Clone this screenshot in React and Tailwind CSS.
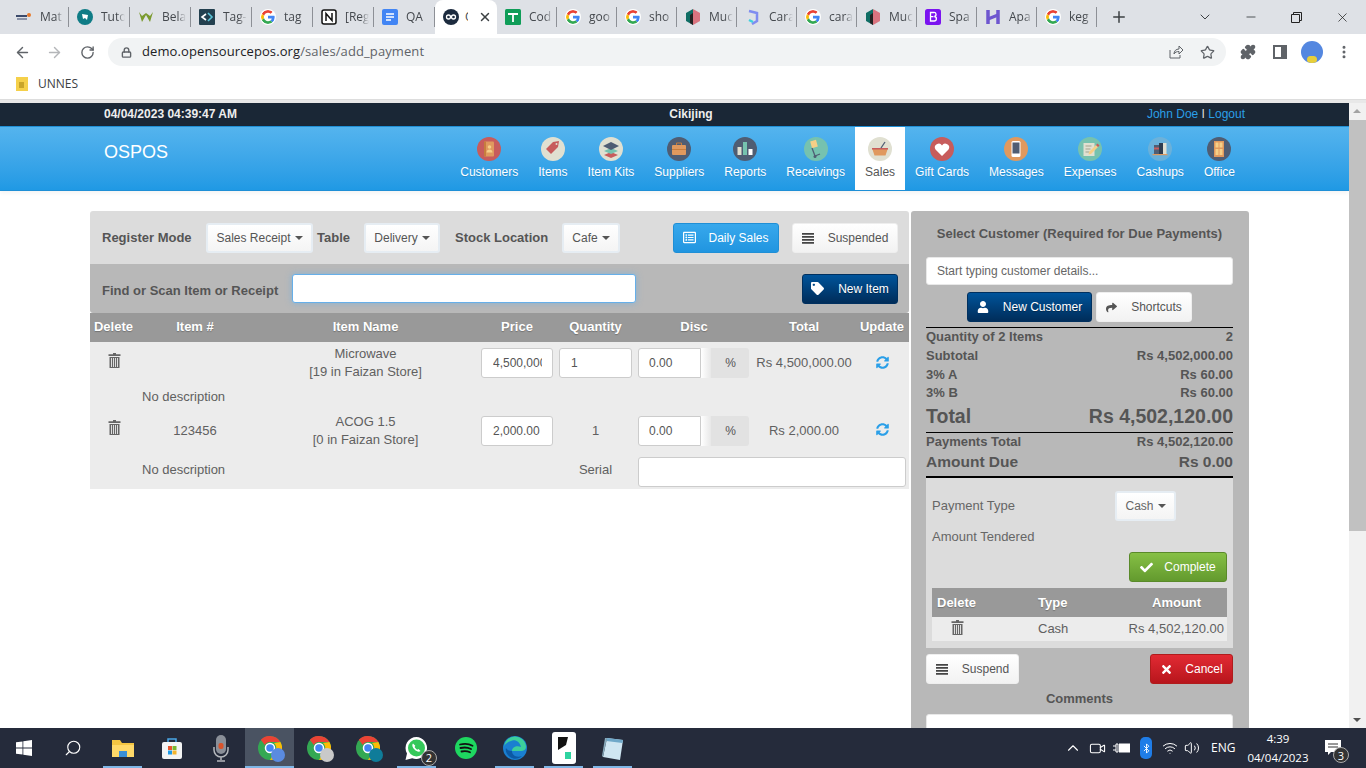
import { FaTag, FaUser, FaShare, FaCheck, FaTimes, FaSyncAlt, FaRegListAlt } from "react-icons/fa";
import { ArrowLeft, ArrowRight, RotateCw, Lock, Star, Puzzle, MoreVertical, ChevronDown, Minus, X, Plus, ChevronUp, Search, Video, Bluetooth, Volume2, Wifi } from "lucide-react";

const tabs = [
  ["Mat", "ahoy"], ["Tuto", "tuto"], ["Bela", "w"], ["Tag-", "tagit"], ["tag", "g"], ["[Reg", "notion"], ["QA", "docs"],
  ["O", "op", true], ["Cod", "sheets"], ["goo", "g"], ["sho", "g"], ["Muc", "cube"], ["Cara", "cara"], ["cara", "g"], ["Muc", "cube"], ["Spa", "bs"], ["Apa", "apa"], ["keg", "g"],
];

const menu = [
  ["Customers", "customers"], ["Items", "items"], ["Item Kits", "kits"], ["Suppliers", "suppliers"], ["Reports", "reports"], ["Receivings", "receivings"],
  ["Sales", "sales", true], ["Gift Cards", "gift"], ["Messages", "messages"], ["Expenses", "expenses"], ["Cashups", "cashups"], ["Office", "office"],
];

function GoogleG({ size = 16 }) {
  return (
    <svg width={size} height={size} viewBox="0 0 48 48" className="rounded-full bg-white p-[1px]">
      <path fill="#EA4335" d="M24 9.5c3.5 0 6.700 1.200 9.200 3.600l6.900-6.900C35.900 2.400 30.500 0 24 0 14.600 0 6.500 5.400 2.600 13.200l8 6.200C12.500 13.700 17.800 9.500 24 9.500z" />
      <path fill="#4285F4" d="M47 24.500c0-1.600-.1-3.100-.4-4.500H24v9h12.900c-.6 3-2.200 5.500-4.700 7.200l7.700 6C44.400 38 47 31.800 47 24.500z" />
      <path fill="#FBBC05" d="M10.600 28.600A14.500 14.500 0 0 1 10.600 19.400l-8-6.200a24 24 0 0 0 0 21.600l8-6.200z" />
      <path fill="#34A853" d="M24 48c6.500 0 11.900-2.100 15.900-5.800l-7.700-6c-2.200 1.500-4.900 2.300-8.200 2.300-6.200 0-11.500-4.200-13.400-9.900l-8 6.200C6.500 42.600 14.600 48 24 48z" />
    </svg>
  );
}

function Favicon({ kind }) {
  if (kind === "g") return <GoogleG />;
  if (kind === "ahoy") return (
    <svg width="16" height="16" viewBox="0 0 16 16"><rect x="0" y="6" width="11" height="2" fill="#3b4a6b" /><rect x="1" y="9" width="10" height="2" fill="#8a93a8" /><circle cx="13" cy="6" r="2" fill="#e8792b" /></svg>
  );
  if (kind === "tuto") return (
    <svg width="16" height="16" viewBox="0 0 16 16"><circle cx="8" cy="8" r="8" fill="#0f7c86" /><path d="M5 5l6 1-1 5-2-2-2 1z" fill="#fff" /></svg>
  );
  if (kind === "w") return (
    <svg width="16" height="16" viewBox="0 0 16 16"><path d="M1 3l3 10 4-7 4 7 3-10-3 4-4-3-4 3z" fill="#7a9a2e" /></svg>
  );
  if (kind === "tagit") return (
    <svg width="16" height="16" viewBox="0 0 16 16"><rect width="16" height="16" rx="1" fill="#23404f" /><path d="M7 5L3 8l4 3" stroke="#fff" strokeWidth="1.600" fill="none" /><path d="M9 4l4 4-4 4" stroke="#5cc4d8" strokeWidth="1.600" fill="none" /></svg>
  );
  if (kind === "notion") return (
    <svg width="16" height="16" viewBox="0 0 16 16"><rect x="1" y="1" width="14" height="14" rx="2" fill="#fff" stroke="#111" strokeWidth="1.500" /><path d="M5 12V4.500l6 7V4" stroke="#111" strokeWidth="1.500" fill="none" /></svg>
  );
  if (kind === "docs") return (
    <svg width="16" height="16" viewBox="0 0 16 16"><rect width="16" height="16" rx="2" fill="#4285f4" /><path d="M4 5h8M4 8h8M4 11h5" stroke="#fff" strokeWidth="1.500" /></svg>
  );
  if (kind === "op") return (
    <svg width="16" height="16" viewBox="0 0 16 16"><circle cx="8" cy="8" r="8" fill="#1c2b3e" /><circle cx="5.500" cy="8" r="2" stroke="#fff" strokeWidth="1.300" fill="none" /><circle cx="10.500" cy="8" r="2" stroke="#fff" strokeWidth="1.300" fill="none" /></svg>
  );
  if (kind === "sheets") return (
    <svg width="16" height="16" viewBox="0 0 16 16"><rect width="16" height="16" rx="1.500" fill="#0f9d58" /><path d="M3 5h10M8 5v8" stroke="#fff" strokeWidth="1.800" /></svg>
  );
  if (kind === "cube") return (
    <svg width="16" height="16" viewBox="0 0 16 16"><path d="M8 0l7 4v8l-7 4z" fill="#d9737f" /><path d="M8 0L1 4v8l7 4z" fill="#0f6d64" /><path d="M5 6l3-2v12l-3-2z" fill="#222" /></svg>
  );
  if (kind === "cara") return (
    <svg width="16" height="16" viewBox="0 0 16 16"><path d="M4 2l8 2v8l-5 3" stroke="#7f8cf0" strokeWidth="2.500" fill="none" /><path d="M4 11l4 2" stroke="#3ed0e0" strokeWidth="2.500" /></svg>
  );
  if (kind === "bs") return (
    <svg width="16" height="16" viewBox="0 0 16 16"><rect width="16" height="16" rx="2.500" fill="#7b13f0" /><path d="M5.500 3.500h3.200a2 2 0 0 1 .6 4 2.200 2.200 0 0 1-.4 4.500H5.500zM5.500 7.600h3" stroke="#fff" strokeWidth="1.300" fill="none" /></svg>
  );
  return (
    <svg width="16" height="16" viewBox="0 0 16 16"><path d="M3 1v14M13 1v14" stroke="#6e56cf" strokeWidth="3.500" /><path d="M3 10l10-4" stroke="#6e56cf" strokeWidth="3" /></svg>
  );
}

function Tab({ title, icon, active, first7 }) {
  if (active) {
    return (
      <div className="relative z-10 flex h-[34px] w-[62px] shrink-0 items-center rounded-t-lg bg-white pl-2">
        <Favicon kind={icon} />
        <span className="ml-[6px] w-[3px] overflow-hidden text-xs text-[#45494e]">{title}</span>
        <X size={14} strokeWidth={2.500} className="ml-[10px] text-[#3c4043]" />
      </div>
    );
  }
  return (
    <div className={`flex h-[34px] shrink-0 items-center pl-2 ${first7 ? "w-[61px]" : "w-[60px]"}`}>
      <Favicon kind={icon} />
      <span className="ml-2 w-[24px] overflow-hidden whitespace-nowrap text-xs text-[#45494e] [mask-image:linear-gradient(90deg,#000_65%,transparent)]">{title}</span>
      <span className="ml-auto h-[20px] w-px bg-[#8d9096]" />
    </div>
  );
}

function MenuIcon({ kind }) {
  const body = {
    customers: <><circle cx="12" cy="12" r="12" fill="#c75c5c" /><rect x="7" y="4.500" width="10" height="15" rx="1" fill="#e0995e" /><path d="M7 4.500h2v15H7z" fill="#c77d3d" /><circle cx="12.500" cy="10" r="1.800" fill="#f5cf87" /><path d="M9.500 15.500c0-2 1.400-3 3-3s3 1 3 3z" fill="#f5cf87" /></>,
    items: <><circle cx="12" cy="12" r="12" fill="#e0e0d1" /><path d="M5 12l7-7 6-1-1 6-7 7z" fill="#c75c5c" /><circle cx="15.500" cy="7" r="1" fill="#e0e0d1" /></>,
    kits: <><circle cx="12" cy="12" r="12" fill="#e0e0d1" /><path d="M12 15l7 3-7 3-7-3z" fill="#c75c5c" /><path d="M12 11l7 3-7 3-7-3z" fill="#76c2af" /><path d="M12 5l8 4-8 4-8-4z" fill="#4f5d73" /></>,
    suppliers: <><circle cx="12" cy="12" r="12" fill="#4f5d73" /><rect x="5" y="8" width="14" height="10" rx="1" fill="#e0995e" /><path d="M9.500 8V6h5v2" stroke="#c77d3d" fill="none" /><rect x="5" y="12" width="14" height="1" fill="#c77d3d" /></>,
    reports: <><circle cx="12" cy="12" r="12" fill="#4f5d73" /><rect x="4.500" y="10" width="4" height="8" fill="#e0e0d1" /><rect x="10" y="5" width="4" height="13" fill="#76c2af" /><rect x="15.500" y="12" width="4" height="6" fill="#fff" /></>,
    receivings: <><circle cx="12" cy="12" r="12" fill="#76c2af" /><rect x="7" y="3.500" width="6" height="7" fill="#f5cf87" transform="rotate(-15 10 7)" /><path d="M8 11l3 8 5-2" stroke="#4f5d73" strokeWidth="1.300" fill="none" /><circle cx="11" cy="19.500" r="1.500" fill="#4f5d73" /></>,
    sales: <><circle cx="12" cy="12" r="12" fill="#e0e0d1" /><path d="M4 11h16l-2.500 7.500h-11z" fill="#e0995e" /><path d="M4 11h16v1.500H4z" fill="#c75c5c" /><path d="M13 11l4-6" stroke="#4f5d73" strokeWidth="1.300" /></>,
    gift: <><circle cx="12" cy="12" r="12" fill="#c75c5c" /><path d="M12 19l-6.500-6.500a3.800 3.800 0 0 1 6.500-4 3.800 3.800 0 0 1 6.500 4z" fill="#fff" /></>,
    messages: <><circle cx="12" cy="12" r="12" fill="#e0995e" /><rect x="7.500" y="4" width="9" height="16" rx="1.500" fill="#fff" /><rect x="8.500" y="5.500" width="7" height="11" fill="#4f5d73" /></>,
    expenses: <><circle cx="12" cy="12" r="12" fill="#76c2af" /><rect x="5.500" y="6" width="11" height="13" fill="#e0e0d1" /><path d="M7.500 9h6M7.500 12h5M7.500 15h4" stroke="#a3a38f" /><path d="M11 15l7-7 2 2-7 7-2.500.5z" fill="#f5cf87" /><path d="M18 8l1.500-1.500 2 2L20 10z" fill="#c75c5c" /></>,
    cashups: <><circle cx="12" cy="12" r="12" fill="#77b3d4" opacity=".75" /><rect x="6" y="8" width="5" height="9" fill="#4f5d73" /><rect x="6" y="10.500" width="5" height="2" fill="#c75c5c" /><rect x="11" y="6" width="4" height="11" fill="#2f3d4f" /><rect x="15" y="6" width="3.500" height="11" fill="#e0e0d1" /><rect x="4.500" y="17" width="15" height="1.200" fill="#e0995e" /></>,
    office: <><circle cx="12" cy="12" r="12" fill="#4f5d73" /><rect x="7" y="4" width="10" height="16" fill="#e0995e" /><rect x="8.500" y="5.500" width="3" height="5" fill="#f5cf87" /><rect x="12.500" y="5.500" width="3" height="5" fill="#f5cf87" /><rect x="8.500" y="12" width="3" height="6" fill="#f5cf87" /><rect x="12.500" y="12" width="3" height="6" fill="#f5cf87" /></>,
  };
  return <svg width="24" height="24" viewBox="0 0 24 24">{body[kind]}</svg>;
}

function Trash() {
  return (
    <svg width="13" height="15" viewBox="0 0 13 15" className="text-[#666]">
      <path d="M5 0h3v1.200h4.500V3H.5V1.200H5z" fill="currentColor" />
      <path d="M1.500 4h10v11h-10z" fill="currentColor" />
      <path d="M3.500 5v9M5.500 5v9M7.500 5v9M9.500 5v9" stroke="#ececec" strokeWidth=".9" />
    </svg>
  );
}

function Bars() {
  return (
    <svg width="12" height="12" viewBox="0 0 12 12" className="text-[#444]">
      <path d="M0 1h12v1.800H0zM0 4h12v1.800H0zM0 7h12v1.800H0zM0 10h12v1.800H0z" fill="currentColor" />
    </svg>
  );
}

function Dropdown({ label, className = "" }) {
  return (
    <div className={`flex h-[30px] items-center justify-center rounded-[3px] border-2 border-[#e6edf3] bg-gradient-to-b from-white to-[#f4f4f4] text-xs text-[#555] ${className}`}>
      {label}
      <span className="ml-1 h-0 w-0 border-x-4 border-t-4 border-x-transparent border-t-[#555]" />
    </div>
  );
}

const whiteBtn = "flex h-[30px] items-center justify-center gap-[14px] rounded-[3px] border border-[#eee] bg-gradient-to-b from-white to-[#f2f2f2] text-xs text-[#555]";
const darkBtn = "flex h-[30px] items-center justify-center gap-[14px] rounded-[3px] border border-[#00305f] bg-gradient-to-b from-[#00549b] to-[#002d5a] text-xs text-white [text-shadow:0_1px_0_rgba(0,0,0,0.3)]";
const tdCls = "p-0 pb-[1px] text-center align-middle";
const inputCls = "flex h-[30px] items-center rounded-[3px] border border-[#ccc] bg-white pl-[11px] pr-[10px] text-xs text-[#555] whitespace-nowrap";

function DiscInput() {
  return (
    <div className="flex h-[30px] w-[111px]">
      <div className="flex w-[63px] items-center rounded-l-[3px] border border-[#ccc] bg-white pl-[10px] text-xs text-[#555]">0.00</div>
      <div className="w-[10px] bg-gradient-to-r from-white to-[#e8e8e8]" />
      <div className="flex flex-1 items-center justify-center rounded-r-[3px] bg-[#e2e2e2] pl-[1px] text-xs text-[#555]">%</div>
    </div>
  );
}

function UpdateCell() {
  return <td className="p-0 pb-[3px] text-center align-middle"><FaSyncAlt size={13} className="mx-auto text-[#2a9fe8]" /></td>;
}

function SummaryRow({ left, right, className }) {
  return (
    <div className={`flex items-center justify-between font-bold text-[#555] ${className}`}>
      <span>{left}</span>
      <span>{right}</span>
    </div>
  );
}

function RegisterPanel() {
  return (
    <div className="w-[819px] shrink-0">
      <div className="flex h-[53px] items-center rounded-t-[3px] bg-[#dcdcdc] pl-[12px]">
        <span className="w-[104px] text-[13px] font-bold text-[#555]">Register Mode</span>
        <Dropdown label="Sales Receipt" className="w-[107px]" />
        <span className="ml-[4px] w-[47px] text-[13px] font-bold text-[#555]">Table</span>
        <Dropdown label="Delivery" className="w-[76px]" />
        <span className="ml-[15px] w-[107px] text-[13px] font-bold text-[#555]">Stock Location</span>
        <Dropdown label="Cafe" className="w-[58px]" />
        <div className="ml-[53px] flex h-[30px] w-[106px] items-center justify-center gap-[12px] rounded-[3px] border border-[#1f8fd6] bg-gradient-to-b from-[#37a8ec] to-[#2095e0] text-xs text-white">
          <FaRegListAlt size={13} /> Daily Sales
        </div>
        <div className={`${whiteBtn} ml-[13px] w-[106px]`}><Bars /> Suspended</div>
      </div>
      <div className="flex h-[49px] items-center rounded-b-[3px] bg-[#b8b8b8] pl-[12px]">
        <span className="w-[190px] pt-[4px] text-[13px] font-bold text-[#555]">Find or Scan Item or Receipt</span>
        <div className="h-[29px] w-[344px] rounded-[3px] border border-[#66afe9] bg-white shadow-[0_0_6px_rgba(102,175,233,0.6)]" />
        <div className={`${darkBtn} ml-[166px] w-[96px]`}><FaTag size={13} /> New Item</div>
      </div>
      <table className="w-full table-fixed border-collapse bg-[#ececec] text-[13px] text-[#606060]">
        <colgroup>
          <col className="w-[47px]" /><col className="w-[116px]" /><col className="w-[225px]" /><col className="w-[78px]" />
          <col className="w-[79px]" /><col className="w-[118px]" /><col className="w-[102px]" /><col className="w-[54px]" />
        </colgroup>
        <thead>
          <tr className="h-[29px] bg-[#999] text-[13px] font-bold text-white [text-shadow:0_1px_1px_rgba(0,0,0,0.25)]">
            {["Delete", "Item #", "Item Name", "Price", "Quantity", "Disc", "Total", "Update"].map((h) => (
              <th key={h} className="p-0 pb-[2px] text-center font-bold">{h}</th>
            ))}
          </tr>
        </thead>
        <tbody>
          <tr className="h-[43px]">
            <td className={tdCls}><span className="inline-block pl-[1px]"><Trash /></span></td>
            <td className={tdCls} />
            <td className={`${tdCls} leading-[18px]`}>Microwave<br />[19 in Faizan Store]</td>
            <td className={tdCls}><div className={`${inputCls} ml-[3px] w-[72px]`}><span className="block min-w-0 overflow-hidden">4,500,000</span></div></td>
            <td className={tdCls}><div className={`${inputCls} ml-[3px] w-[73px]`}>1</div></td>
            <td className={`${tdCls} pl-[3px]`}><DiscInput /></td>
            <td className={tdCls}>Rs 4,500,000.00</td>
            <UpdateCell />
          </tr>
          <tr className="h-[23px]"><td /><td colSpan={7} className="p-0 pl-[5px]">No description</td></tr>
          <tr className="h-[46px]">
            <td className={tdCls}><span className="inline-block pl-[1px]"><Trash /></span></td>
            <td className={tdCls}>123456</td>
            <td className={`${tdCls} leading-[18px]`}>ACOG 1.5<br />[0 in Faizan Store]</td>
            <td className={tdCls}><div className={`${inputCls} ml-[3px] w-[72px]`}>2,000.00</div></td>
            <td className={tdCls}>1</td>
            <td className={`${tdCls} pl-[3px]`}><DiscInput /></td>
            <td className={tdCls}>Rs 2,000.00</td>
            <UpdateCell />
          </tr>
          <tr className="h-[35px]">
            <td /><td className="p-0 pb-[3px] pl-[5px]">No description</td><td /><td />
            <td className="p-0 pb-[3px] text-center">Serial</td>
            <td colSpan={3} className="p-0 pl-[3px]"><div className="h-[30px] w-[268px] rounded-[3px] border border-[#ccc] bg-white" /></td>
          </tr>
        </tbody>
      </table>
    </div>
  );
}

function CustomerPanel() {
  return (
    <div className="h-[517px] w-[338px] shrink-0 overflow-hidden rounded-t-[3px] bg-[#b8b8b8] pl-[15px] pr-[16px] text-[#555]">
      <div className="flex h-[46px] items-center justify-center text-[13px] font-bold">Select Customer (Required for Due Payments)</div>
      <div className="flex h-[28px] items-center rounded-[3px] border border-[#e8e8e8] bg-white pl-[10px] text-xs text-[#666]">Start typing customer details...</div>
      <div className="mt-[7px] flex justify-center gap-[4px]">
        <div className={`${darkBtn} w-[125px]`}><FaUser size={12} /> New Customer</div>
        <div className={`${whiteBtn} w-[96px]`}><FaShare size={11} /> Shortcuts</div>
      </div>
      <div className="mt-[5px] border-t border-black">
        <SummaryRow left="Quantity of 2 Items" right="2" className="h-[18px] text-[13px]" />
        <SummaryRow left="Subtotal" right="Rs 4,502,000.00" className="h-[19px] text-[13px]" />
        <SummaryRow left="3% A" right="Rs 60.00" className="h-[19px] text-[13px]" />
        <SummaryRow left="3% B" right="Rs 60.00" className="h-[18px] text-[13px]" />
        <SummaryRow left="Total" right="Rs 4,502,120.00" className="h-[30px] text-[19.5px]" />
      </div>
      <div className="border-t border-black">
        <SummaryRow left="Payments Total" right="Rs 4,502,120.00" className="h-[18px] text-[13px]" />
        <SummaryRow left="Amount Due" right="Rs 0.00" className="h-[25px] pb-[4px] text-[15.5px]" />
      </div>
      <div className="h-[172px] border-t-2 border-black bg-[#dcdcdc] px-[6px] pt-[13px] text-[13px] text-[#666]">
        <div className="flex h-[30px] items-center justify-between pr-[51px]">
          <span>Payment Type</span>
          <Dropdown label="Cash" className="w-[61px] from-[#f3f3f3] to-[#eeeeee] text-[#666]" />
        </div>
        <div className="mt-[6px] flex h-[20px] items-center">Amount Tendered</div>
        <div className="mt-[5px] flex justify-end">
          <div className="flex h-[30px] w-[98px] items-center justify-center gap-[11px] rounded-[3px] border border-[#5a8a2a] bg-gradient-to-b from-[#86c045] to-[#639a2e] text-xs text-white">
            <FaCheck size={13} /> Complete
          </div>
        </div>
        <div className="mt-[6px] flex h-[29px] items-center bg-[#999] text-[13px] font-bold text-white [text-shadow:0_1px_1px_rgba(0,0,0,0.25)]">
          <span className="w-[106px] pl-[5px]">Delete</span>
          <span className="w-[78px]">Type</span>
          <span className="flex-1 pl-[36px]">Amount</span>
        </div>
        <div className="flex h-[24px] items-center bg-[#ececec] text-[#606060]">
          <span className="w-[106px] pb-[4px] pl-[19px]"><Trash /></span>
          <span className="w-[78px]">Cash</span>
          <span className="flex-1 pr-[3px] text-right">Rs 4,502,120.00</span>
        </div>
      </div>
      <div className="mt-[6px] flex justify-between">
        <div className={`${whiteBtn} w-[93px]`}><Bars /> Suspend</div>
        <div className="flex h-[30px] w-[83px] items-center justify-center gap-[12px] rounded-[3px] border border-[#b01c1c] bg-gradient-to-b from-[#e22a33] to-[#b8151c] text-xs text-white">
          <FaTimes size={13} /> Cancel
        </div>
      </div>
      <div className="mt-[5px] text-center text-[13px] font-bold">Comments</div>
      <div className="mt-[5px] h-[60px] rounded-[3px] border border-[#e8e8e8] bg-white" />
    </div>
  );
}

function TaskIcon({ kind }) {
  if (kind === "folder") return (
    <svg width="24" height="24" viewBox="0 0 24 24"><path d="M1 4h8l2 3h12v14H1z" fill="#f4c542" /><path d="M1 9h22v12H1z" fill="#ffd969" /><path d="M8 21v-6h8v6" fill="#3a8fd8" /></svg>
  );
  if (kind === "store") return (
    <svg width="24" height="24" viewBox="0 0 24 24"><path d="M8 6V3h8v3" stroke="#4aa8e8" strokeWidth="1.500" fill="none" /><rect x="2" y="6" width="20" height="17" rx="2" fill="#f4f4f4" /><rect x="8" y="10" width="4" height="4" fill="#e8532b" /><rect x="12.500" y="10" width="4" height="4" fill="#7ab82e" /><rect x="8" y="14.500" width="4" height="4" fill="#1e9be8" /><rect x="12.500" y="14.500" width="4" height="4" fill="#f4b42b" /></svg>
  );
  if (kind === "mic") return (
    <svg width="24" height="28" viewBox="0 0 24 28"><rect x="7" y="1" width="10" height="19" rx="5" fill="#8a8f98" /><rect x="9.500" y="9" width="5" height="6" rx="2" fill="#d9532b" /><path d="M5 13v3a7 7 0 0 0 14 0v-3M12 23v3M8 27h8" stroke="#b5b8bd" strokeWidth="1.500" fill="none" /></svg>
  );
  if (kind === "spotify") return (
    <svg width="24" height="24" viewBox="0 0 24 24"><circle cx="12" cy="12" r="11" fill="#1ed760" /><path d="M6 8.500c4-1 9-.8 12.500 1.200M6.500 12c3.500-.8 7.500-.6 10.500 1M7.500 15.500c3-.6 6-.4 8.500.8" stroke="#111" strokeWidth="1.800" fill="none" strokeLinecap="round" /></svg>
  );
  if (kind === "edge") return (
    <svg width="26" height="26" viewBox="0 0 26 26"><circle cx="13" cy="13" r="12" fill="#1a7fd0" /><path d="M2 13a11 11 0 0 1 22-1c0 3-3 4.500-6 4H10c0-4 5-6 9-4-1-5-6-8-10-6-4 1-7 4-7 7z" fill="#3ccf9b" /><path d="M10 16c0 4 4 7 10 5-3 3-8 4-12 1-3-2-5-6-4-9 1 2 3 3 6 3z" fill="#0c59a4" /></svg>
  );
  if (kind === "bw") return (
    <svg width="24" height="32" viewBox="0 0 24 32"><rect width="24" height="32" rx="3" fill="#fff" /><path d="M6 5h10l-2 8-8 5z" fill="#111" /><rect x="13" y="20" width="6" height="7" fill="#2ed3a0" /></svg>
  );
  return (
    <svg width="24" height="28" viewBox="0 0 24 28"><path d="M6 4l16 2-3 20-17-3z" fill="#cfe6f2" /><path d="M6 4l16 2-.6 3-16-2z" fill="#6fa8c9" /><path d="M2 23l4-19-2 0-3 18z" fill="#8ab" /></svg>
  );
}

function ChromeIcon({ badge }) {
  return (
    <div className="relative h-[24px] w-[24px]">
      <svg width="24" height="24" viewBox="0 0 24 24">
        <circle cx="12" cy="12" r="12" fill="#34a853" />
        <path d="M12 0a12 12 0 0 1 10.400 6H12a6 6 0 0 0-5.200 3L2.800 3.800A12 12 0 0 1 12 0z" fill="#ea4335" />
        <path d="M22.400 6A12 12 0 0 1 12 24l5.200-9A6 6 0 0 0 16 7z" fill="#fbbc05" />
        <circle cx="12" cy="12" r="4.500" fill="#4285f4" stroke="#fff" strokeWidth="1.500" />
      </svg>
      <div className={`absolute -bottom-[2px] -right-[3px] flex h-[14px] w-[14px] items-center justify-center rounded-full text-[8px] text-white ${badge}`} />
    </div>
  );
}

function TaskCell({ children, running, active }) {
  return (
    <div className={`relative flex h-[40px] w-[49px] shrink-0 items-center justify-center ${active ? "bg-[#4a5362]" : ""}`}>
      {children}
      {running && <span className={`absolute bottom-0 h-[2px] bg-[#7fb6e6] ${active ? "inset-x-0" : "inset-x-[5px]"}`} />}
    </div>
  );
}

function Taskbar() {
  return (
    <div className="flex h-[40px] shrink-0 items-center bg-[#252b3b] font-['Open_Sans',sans-serif] text-white">
      <div className="flex h-[40px] w-[48px] items-center justify-center">
        <svg width="16" height="16" viewBox="0 0 16 16"><path d="M0 2.300l6.500-.9v6.200H0zM7.300 1.300L16 0v7.600H7.300zM0 8.400h6.500v6.200L0 13.700zM7.300 8.400H16V16l-8.700-1.200z" fill="#fff" /></svg>
      </div>
      <div className="flex h-[40px] w-[50px] items-center justify-center"><Search size={18} strokeWidth={1.500} className="-scale-x-100" /></div>
      <TaskCell running><TaskIcon kind="folder" /></TaskCell>
      <TaskCell><TaskIcon kind="store" /></TaskCell>
      <TaskCell><TaskIcon kind="mic" /></TaskCell>
      <TaskCell running active><ChromeIcon badge="bg-[#5a8be0]" /></TaskCell>
      <TaskCell><ChromeIcon badge="bg-[#c9c9c9]" /></TaskCell>
      <TaskCell><ChromeIcon badge="bg-[#0f7c99]" /></TaskCell>
      <TaskCell running>
        <div className="relative">
          <svg width="25" height="25" viewBox="0 0 25 25"><path d="M12.500 1a11 11 0 0 0-9.500 16.500L1.500 24l6.700-1.700A11 11 0 1 0 12.500 1z" fill="#fff" /><circle cx="12.500" cy="12" r="8.500" fill="#35c85a" /><path d="M9 7.500c-1.500 1.500-.5 4 1.500 6s4.500 3 6 1.500l-2-2-1.200.7c-1-.5-2.200-1.700-2.700-2.700l.7-1.200z" fill="#fff" /></svg>
          <span className="absolute -bottom-[5px] -right-[8px] flex h-[16px] w-[16px] items-center justify-center rounded-full border border-[#aaa] bg-[#333] text-[11px] leading-none">2</span>
        </div>
      </TaskCell>
      <TaskCell><TaskIcon kind="spotify" /></TaskCell>
      <TaskCell running><TaskIcon kind="edge" /></TaskCell>
      <TaskCell running><TaskIcon kind="bw" /></TaskCell>
      <TaskCell running><TaskIcon kind="note" /></TaskCell>
      <div className="ml-auto flex h-full items-center text-xs">
        <ChevronUp size={18} strokeWidth={1.500} />
        <Video size={17} strokeWidth={1.500} className="ml-[7px]" />
        <svg width="18" height="12" viewBox="0 0 18 12" className="ml-[7px]"><path d="M0 4h3M0 8h3M3 2h2v8H3z" stroke="#fff" fill="none" /><rect x="6" y="1.500" width="11" height="9" fill="#fff" /></svg>
        <div className="ml-[9px] flex h-[22px] w-[12px] items-center justify-center rounded-[5px] bg-[#1f7de8]"><Bluetooth size={11} strokeWidth={2} /></div>
        <Wifi size={16} strokeWidth={1.500} className="ml-[10px]" />
        <Volume2 size={16} strokeWidth={1.500} className="ml-[6px]" />
        <span className="ml-[11px] w-[25px]">ENG</span>
        <div className="ml-[5px] w-[74px] text-center text-[11.5px] leading-[19px]">4:39<br />04/04/2023</div>
        <div className="relative ml-[10px] mr-[25px] h-[16px] w-[16px]">
          <svg width="16" height="16" viewBox="0 0 16 16"><path d="M0 0h16v12H6l-3 3v-3H0z" fill="#fff" /><path d="M3 4h10M3 7h10" stroke="#333" /></svg>
          <span className="absolute -bottom-[7px] -right-[8px] flex h-[16px] w-[16px] items-center justify-center rounded-full border border-[#aaa] bg-[#333] text-[11px] leading-none">3</span>
        </div>
      </div>
    </div>
  );
}

export default function App() {
  return (
    <div className="flex h-screen w-full flex-col overflow-hidden bg-white font-['Liberation_Sans',Arial,sans-serif]">
      {/* browser chrome */}
      <div className="font-['Open_Sans',sans-serif]">
        <div className="flex h-[34px] items-center bg-[#dee1e6] pl-2">
          {tabs.map(([title, icon, active], i) => (
            <Tab key={i} title={title} icon={icon} active={active} first7={i < 7} />
          ))}
          <Plus size={18} strokeWidth={2} className="ml-[13px] text-[#3c4043]" />
          <ChevronDown size={16} strokeWidth={1.500} className="ml-[69px] text-[#3c4043]" />
          <Minus size={14} strokeWidth={1.500} className="ml-[31px] text-[#3c4043]" />
          <svg width="11" height="11" viewBox="0 0 11 11" className="ml-[33px] text-[#222]"><path d="M2.500 2.500V.5h8v8h-2M.5 2.500h8v8h-8z" fill="none" stroke="currentColor" /></svg>
          <X size={15} strokeWidth={1.200} className="ml-[33px] text-[#222]" />
        </div>
        <div className="flex h-[34px] items-center bg-white pl-[14px] pt-[2px]">
          <ArrowLeft size={17} strokeWidth={2} className="text-[#5f6368]" />
          <ArrowRight size={17} strokeWidth={2} className="ml-[15px] text-[#b4b6b9]" />
          <RotateCw size={15} strokeWidth={2.200} className="ml-[17px] text-[#5f6368]" />
          <div className="ml-[13px] flex h-[28px] w-[1118px] items-center rounded-full bg-[#f1f3f4] pl-[13px] pr-[11px]">
            <Lock size={11} strokeWidth={3} className="text-[#5f6368]" />
            <span className="ml-[10px] text-[13px] tracking-[0.1px] text-[#202124]">demo.opensourcepos.org<span className="text-[#5f6368]">/sales/add_payment</span></span>
            <svg width="16" height="16" viewBox="0 0 16 16" className="ml-auto text-[#5f6368]"><path d="M2 6v8h10v-3M6 10c0-3 2-5 5-5V2l4 4-4 4V7.500c-2 0-4 .5-5 2.500z" fill="none" stroke="currentColor" /></svg>
            <Star size={15} strokeWidth={2} className="ml-[16px] text-[#5f6368]" />
          </div>
          <Puzzle size={16} strokeWidth={2} fill="#5f6368" className="ml-[14px] text-[#5f6368]" />
          <svg width="14" height="14" viewBox="0 0 14 14" className="ml-[17px]"><path d="M0 0h14v14H0z" fill="#5f6368" /><path d="M2 2h6v10H2z" fill="#fff" /></svg>
          <div className="relative ml-[14px] h-[22px] w-[22px] overflow-hidden rounded-full bg-[#5487e0]"><span className="absolute bottom-0 left-[6px] h-[7px] w-[10px] rounded-full bg-[#e8cf3a]" /></div>
          <MoreVertical size={16} strokeWidth={2.500} className="ml-[13px] text-[#5f6368]" />
        </div>
        <div className="flex h-[32px] items-center border-b border-[#ddd] bg-white pl-[16px]">
          <svg width="12" height="14" viewBox="0 0 12 14"><rect width="12" height="14" fill="#f5d04a" /><rect x="3" y="5" width="5" height="6" fill="#c9a52a" /></svg>
          <span className="ml-[10px] text-xs text-[#3c4043]">UNNES</span>
        </div>
      </div>

      <div className="flex min-h-0 flex-1 border-t-[3px] border-[#e8e8e8]">
        <div className="min-w-0 flex-1 overflow-hidden bg-white">
          <div className="flex h-[23px] items-center bg-[#1a2736] pb-[1px] pl-[104px] pr-[104px] text-xs">
            <div className="w-[487px] font-bold text-[#eee]">04/04/2023 04:39:47 AM</div>
            <div className="w-[200px] text-center font-bold text-[#eee]">Cikijing</div>
            <div className="flex-1 text-right text-[#2a9fe8]">John Doe <span className="text-[#ddd]">I</span> Logout</div>
          </div>
          <div className="flex h-[65px] items-start justify-between border-y border-[#1f8fd6] bg-gradient-to-b from-[#54b4ee] to-[#1f99e4] pl-[104px] pr-[104px] shadow-[0_2px_4px_rgba(0,0,0,0.05)]">
            <div className="mt-[11px] text-lg text-white">OSPOS</div>
            <div className="flex h-full">
              {menu.map(([label, icon, active]) => (
                <div key={label} className={`flex h-[63px] flex-col items-center px-[10px] pt-[10px] text-xs ${active ? "bg-white text-[#555]" : "text-white [text-shadow:0_1px_0_rgba(0,0,0,0.15)]"}`}>
                  <MenuIcon kind={icon} />
                  <span className="mt-[3px] whitespace-nowrap">{label}</span>
                </div>
              ))}
            </div>
          </div>
          <div className="flex gap-[2px] pl-[90px] pt-[20px]">
            <RegisterPanel />
            <CustomerPanel />
          </div>
        </div>
        <div className="relative w-[17px] shrink-0 bg-[#f1f1f1]">
          <span className="absolute left-[4px] top-[6px] h-0 w-0 border-x-[4px] border-b-[4px] border-x-transparent border-b-[#a3a3a3]" />
          <div className="absolute inset-x-0 top-[17px] h-[411px] bg-[#c1c1c1]" />
          <span className="absolute bottom-[6px] left-[4px] h-0 w-0 border-x-[4px] border-t-[4px] border-x-transparent border-t-[#505050]" />
        </div>
      </div>

      <Taskbar />
    </div>
  );
}
